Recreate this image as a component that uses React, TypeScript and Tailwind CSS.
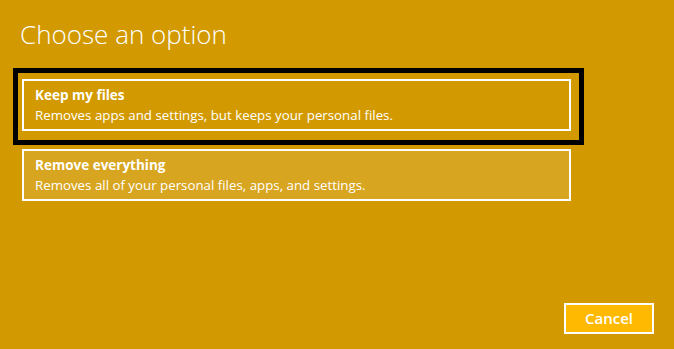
import React from 'react';

const font = { fontFamily: '"Open Sans", "Noto Sans", sans-serif' };

function OptionCard({ title, desc, highlight }: { title: string; desc: string; highlight?: boolean }) {
    return (
        <button
            className={`flex flex-col items-start w-[549px] h-[52px] border-2 border-white px-[11px] pt-[5px] text-left text-white ${
                highlight ? 'bg-[#d8a520]' : 'bg-[#d29a00]'
            }`}
        >
            <span className="text-[13.5px] font-bold leading-[19px]">{title}</span>
            <span className="text-[13.3px] leading-[20px]">{desc}</span>
        </button>
    );
}

export default function App() {
    return (
        <div className="w-[674px] h-[349px] bg-[#d29a00] flex flex-col relative" style={font}>
            <h1 className="pl-[20px] pt-[17px] text-[26px] font-light leading-[34px] text-white">
                Choose an option
            </h1>

            <div className="ml-[13px] mt-[17px] w-[571px] border-[5px] border-black pl-[4px] pt-[6px] pb-[9px]">
                <OptionCard
                    title="Keep my files"
                    desc="Removes apps and settings, but keeps your personal files."
                />
            </div>

            <div className="ml-[22px] mt-[4px]">
                <OptionCard
                    title="Remove everything"
                    desc="Removes all of your personal files, apps, and settings."
                    highlight
                />
            </div>

            <div className="flex-1" />

            <div className="flex justify-end pr-[20px] pb-[15px]">
                <button className="w-[90px] h-[31px] border-2 border-white bg-[#ffb900] text-white text-[15px] font-semibold">
                    Cancel
                </button>
            </div>
        </div>
    );
}
